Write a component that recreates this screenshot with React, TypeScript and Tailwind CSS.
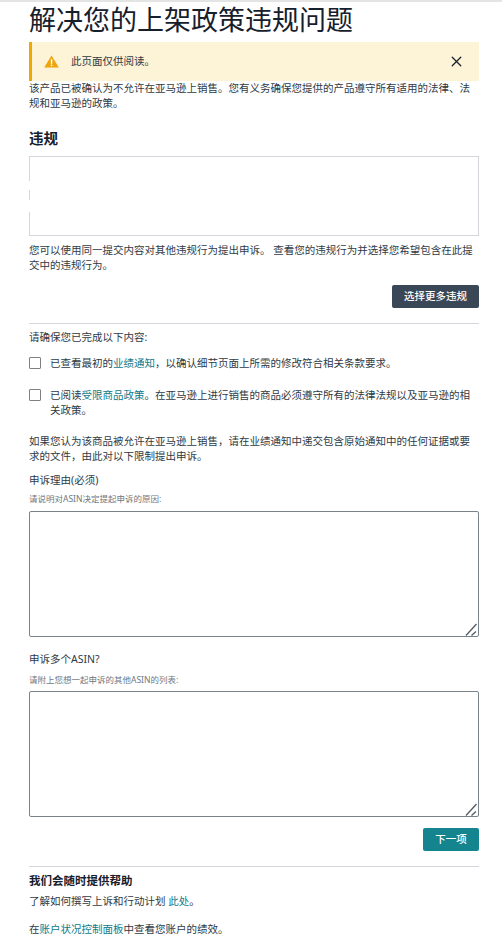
import { X } from "lucide-react";

const font = "font-['Noto_Sans','Noto_Sans_CJK_SC',sans-serif]";

function Checkbox() {
  return <span className="mt-px block h-[12px] w-[12px] shrink-0 rounded-[1px] border border-[#7d8183] bg-white" />;
}

function Link({ children }: { children: React.ReactNode }) {
  return <span className="text-[#0f7a8a]">{children}</span>;
}

function AppealBox() {
  return (
    <div className="relative">
      <textarea className="block h-[126px] w-full resize-none rounded-[2px] border border-[#79838c] bg-white" />
      {/* resize grip */}
      <svg width="14" height="14" viewBox="0 0 14 14" className="absolute bottom-px right-px" fill="none" stroke="#555b60" strokeWidth="1.3">
        <path d="M2 13.5 L12.5 2" />
        <path d="M7.5 13.5 L12 9.5" />
      </svg>
    </div>
  );
}

export default function App() {
  return (
    <div className={`${font} h-[937px] overflow-hidden border-t-2 border-[#e4e4e4] bg-white pl-[29px] pr-[23px] text-[10.5px] leading-[15px] text-[#2f3a45]`}>
      <h1 className="h-[40px] text-[27px] leading-[36px] font-normal text-[#16202c]">解决您的上架政策违规问题</h1>

      {/* read only notice */}
      <div className="flex h-[39px] items-center border-l-[3px] border-[#f0a800] bg-[#fdf3d6] pl-[12px] pr-[14px]">
        <svg width="15" height="13" viewBox="0 0 15 13" className="shrink-0">
          <path d="M7.5 0.5 L14.8 12.5 H0.2 Z" fill="#eea50c" />
          <rect x="6.8" y="4.2" width="1.5" height="4.6" fill="#fff" />
          <rect x="6.8" y="9.6" width="1.5" height="1.5" fill="#fff" />
        </svg>
        <span className="ml-[12px] flex-1">此页面仅供阅读。</span>
        <X size={17} strokeWidth={1.8} className="text-[#16202c]" />
      </div>

      <p>该产品已被确认为不允许在亚马逊上销售。您有义务确保您提供的产品遵守所有适用的法律、法规和亚马逊的政策。</p>

      <h2 className="mt-[17px] text-[14.5px] leading-[20px] font-bold text-[#16202c]">违规</h2>
      <div className="relative mt-[8px] h-[80px] border border-[#d5d6dc]">
        <span className="absolute -left-px top-[24px] h-[9px] w-px bg-white" />
        <span className="absolute -left-px top-[43px] h-[12px] w-px bg-white" />
      </div>
      <p className="mt-[7px]">您可以使用同一提交内容对其他违规行为提出申诉。 查看您的违规行为并选择您希望包含在此提交中的违规行为。</p>

      <div className="mt-[12px] flex justify-end">
        <button className="h-[23px] w-[87px] rounded-[2px] bg-[#3a4757] text-[10.5px] font-medium text-white">选择更多违规</button>
      </div>
      <hr className="mt-[15px] border-[#d5d6dc]" />

      <p className="mt-[6px]">请确保您已完成以下内容:</p>
      <div className="mt-[10px] flex gap-[9px] py-[1px]">
        <Checkbox />
        <p>已查看最初的<Link>业绩通知</Link>，以确认细节页面上所需的修改符合相关条款要求。</p>
      </div>
      <div className="mt-[16px] flex gap-[9px]">
        <Checkbox />
        <p>已阅读<Link>受限商品政策</Link>。在亚马逊上进行销售的商品必须遵守所有的法律法规以及亚马逊的相关政策。</p>
      </div>
      <p className="mt-[16px]">如果您认为该商品被允许在亚马逊上销售，请在业绩通知中递交包含原始通知中的任何证据或要求的文件，由此对以下限制提出申诉。</p>

      <p className="mt-[9px]">申诉理由(必须)</p>
      <p className="mt-[4px] mb-[6px] text-[8.5px] leading-[13px] text-[#6f7780]">请说明对ASIN决定提起申诉的原因:</p>
      <AppealBox />

      <p className="mt-[15px]">申诉多个ASIN?</p>
      <p className="mt-[6px] mb-[5px] text-[8.5px] leading-[13px] text-[#6f7780]">请附上您想一起申诉的其他ASIN的列表:</p>
      <AppealBox />

      <div className="mt-[11px] flex justify-end">
        <button className="h-[23px] w-[56px] rounded-[2px] bg-[#14848f] text-[10.5px] font-medium text-white">下一项</button>
      </div>
      <hr className="mt-[15px] border-[#d5d6dc]" />

      <h3 className="mt-[6px] text-[11.5px] leading-[16px] font-bold text-[#16202c]">我们会随时提供帮助</h3>
      <p className="mt-[5px]">了解如何撰写上诉和行动计划 <Link>此处</Link>。</p>
      <p className="mt-[13px]">在<Link>账户状况控制面板</Link>中查看您账户的绩效。</p>
    </div>
  );
}
